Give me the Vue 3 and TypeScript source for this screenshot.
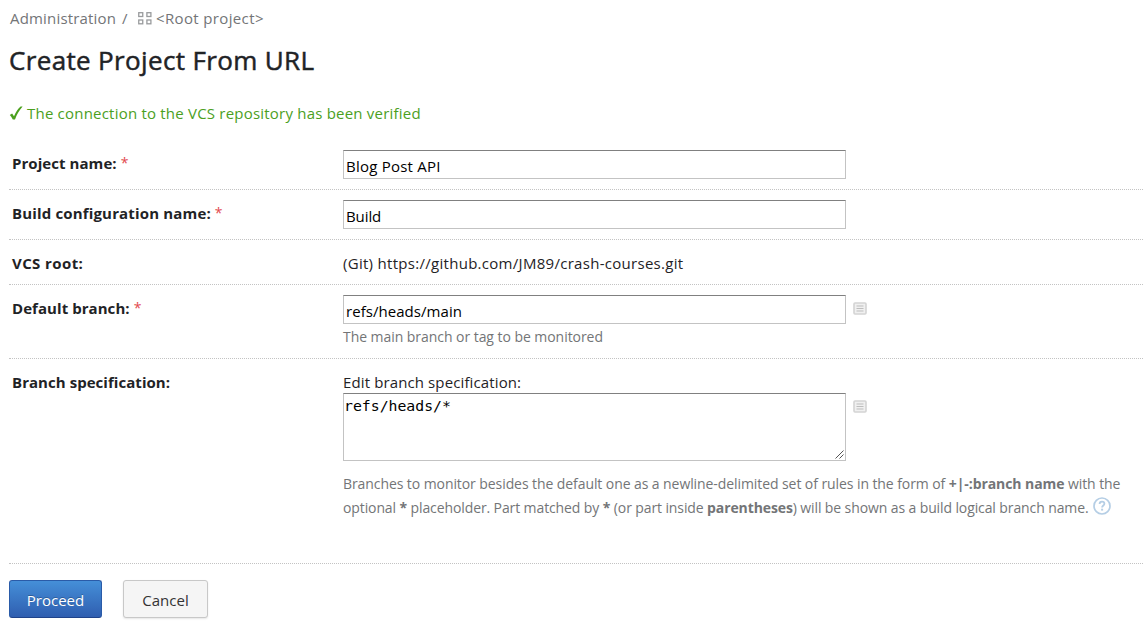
<script setup lang="ts">
import { ref } from 'vue'

const projectName = ref<string>('Blog Post API')
const buildName = ref<string>('Build')
const defaultBranch = ref<string>('refs/heads/main')
const branchSpec = ref<string>('refs/heads/*')
</script>

<template>
  <main class="page">
    <nav class="crumbs">
      <a class="crumb-admin">Administration</a>
      <span class="slash">/</span>
      <svg class="grid-icon" width="14" height="13" viewBox="0 0 14 13" fill="none" stroke="#999b9d" stroke-width="1.3">
        <rect x="0.75" y="0.7" width="4" height="3.8" />
        <rect x="8.9" y="0.7" width="4" height="3.8" />
        <rect x="0.75" y="8" width="4" height="3.8" />
        <rect x="8.9" y="8" width="4" height="3.8" />
      </svg>
      <a class="crumb-root">&lt;Root project&gt;</a>
    </nav>
    <h1>Create Project From URL</h1>
    <div class="verified">
      <svg width="14" height="15" viewBox="0 0 14 15">
        <path d="M0.8 8.9 L3.1 7.6 L5 10.3 C6.8 6.2 9.1 2.7 11.6 0.6 L13.6 0.6 C10.2 4.4 7.9 8.6 6 13.4 L3.8 13.6 C2.9 11.8 2 10.1 0.8 8.9 Z" fill="#4ba01e" />
      </svg>
      <span class="verified-text">The connection to the VCS repository has been verified</span>
    </div>

    <form class="form" @submit.prevent>
      <div class="row r1">
        <div class="label"><span class="l1">Project name:</span><span class="star">*</span></div>
        <div class="field"><input v-model="projectName" class="t-name" type="text" spellcheck="false" /></div>
      </div>
      <div class="row r2">
        <div class="label"><span class="l2">Build configuration name:</span><span class="star">*</span></div>
        <div class="field"><input v-model="buildName" class="t-build" type="text" spellcheck="false" /></div>
      </div>
      <div class="row r3">
        <div class="label"><span class="l3">VCS root:</span></div>
        <div class="field"><div class="vcs">(Git) https://github.com/JM89/crash-courses.git</div></div>
      </div>
      <div class="row r4">
        <div class="label"><span class="l4">Default branch:</span><span class="star">*</span></div>
        <div class="field">
          <div class="control">
            <input v-model="defaultBranch" class="t-branch" type="text" spellcheck="false" />
            <svg class="list-icon" width="14" height="13" viewBox="0 0 14 13">
              <rect x="1" y="1" width="12" height="11" rx="1" fill="#f0f0f0" stroke="#d4d4d4" stroke-width="1.6" />
              <path d="M3.5 4h7M3.5 6.5h7M3.5 9h7" stroke="#bdbdbd" />
            </svg>
          </div>
          <div class="hint">The main branch or tag to be monitored</div>
        </div>
      </div>
      <div class="row r5">
        <div class="label"><span class="l5">Branch specification:</span></div>
        <div class="field">
          <div class="edit">Edit branch specification:</div>
          <div class="control">
            <div class="area">
              <textarea v-model="branchSpec" spellcheck="false"></textarea>
              <svg class="grip" width="9" height="9" viewBox="0 0 9 9" stroke="#555" stroke-width="1">
                <path d="M0.5 8.5L8.5 0.5M4.5 8.5L8.5 4.5" />
              </svg>
            </div>
            <svg class="list-icon" width="14" height="13" viewBox="0 0 14 13">
              <rect x="1" y="1" width="12" height="11" rx="1" fill="#f0f0f0" stroke="#d4d4d4" stroke-width="1.6" />
              <path d="M3.5 4h7M3.5 6.5h7M3.5 9h7" stroke="#bdbdbd" />
            </svg>
          </div>
          <div class="help">
            <div class="line1">Branches to monitor besides the default one as a newline-delimited set of rules in the form of <b>+|-:branch name</b> with the</div>
            <div class="line2">
              <span>optional <b>*</b> placeholder. Part matched by <b>*</b> (or part inside <b>parentheses</b>) will be shown as a build logical branch name.</span>
              <svg class="question" width="18" height="18" viewBox="0 0 18 18" fill="none" stroke="#b5cee5">
                <circle cx="9" cy="9" r="8" stroke-width="1.7" />
                <path d="M6.6 7.1C6.6 5.5 7.6 4.7 9 4.7C10.5 4.7 11.4 5.6 11.4 6.8C11.4 8.6 9.1 8.5 9.1 10.6" stroke-width="1.8" />
                <path d="M9.1 11.7V13.6" stroke-width="2" />
              </svg>
            </div>
          </div>
        </div>
      </div>
      <div class="actions">
        <button class="btn proceed" type="button"><span>Proceed</span></button>
        <button class="btn cancel" type="button"><span>Cancel</span></button>
      </div>
    </form>
  </main>
</template>

<style>
body {
  background: #fff;
  overflow: hidden;
}
</style>

<style scoped>
.page {
  box-sizing: border-box;
  height: 629px;
  padding: 6px 0 0 9px;
  overflow: hidden;
  color: #1f2326;
  font-family: 'Open Sans', 'Noto Sans', sans-serif;
  font-size: 15px;
  line-height: 24px;
  white-space: nowrap;
}
.crumbs {
  display: flex;
  height: 24px;
  padding-left: 1px;
  color: #737577;
}
.crumb-admin { width: 112px; letter-spacing: 0.18px; }
.slash { width: 16px; }
.grid-icon { margin-top: 6px; width: 14px; margin-right: 4px; }
.crumb-root { letter-spacing: 0.36px; }
h1 {
  height: 36px;
  margin: 12px 0 0;
  font-size: 26px;
  font-weight: 500;
  line-height: 36px;
  letter-spacing: 0.35px;
  -webkit-text-stroke: 0.5px #1f2326;
}
.verified {
  display: flex;
  height: 24px;
  margin-top: 23px;
  color: #4ba01e;
}
.verified svg { margin: 5px 4px 0 0; }
.verified-text { letter-spacing: 0.21px; }
.form { margin-top: 15px; }
.row {
  box-sizing: border-box;
  display: grid;
  grid-template-columns: 334px 1fr;
  border-bottom: 1px dotted #c3c3c3;
  padding-top: 10px;
}
.r1 { height: 50px; }
.r2 { height: 50px; }
.r3 { height: 45px; }
.r4 { height: 74px; }
.r5 { height: 205px; }
.label {
  display: flex;
  gap: 4px;
  padding-left: 3px;
  margin-top: 1px;
  font-weight: 700;
}
.l1, .l4 { letter-spacing: 0.06px; }
.l2 { letter-spacing: 0.16px; }
.l3 { letter-spacing: 0.4px; }
.l5 { letter-spacing: 0.05px; }
.star { font-weight: 400; font-size: 14px; color: #e2494f; }
input, textarea {
  box-sizing: border-box;
  display: block;
  width: 503px;
  margin: 0;
  border: 1px solid #c3c3c3;
  border-top-color: #808080;
  border-radius: 0;
  outline: none;
  background: #fff;
  color: #000;
}
input {
  height: 29px;
  padding: 2px 2px 0;
  font: 15px 'Open Sans', 'Noto Sans', sans-serif;
}
.t-name { letter-spacing: 0.22px; }
.t-build { letter-spacing: -0.1px; }
.t-branch { letter-spacing: 0.05px; }
.control { display: flex; gap: 7px; }
.list-icon { margin-top: 7px; }
.vcs { margin-top: 1px; letter-spacing: 0.29px; }
.hint { margin-top: 1px; color: #737577; font-size: 14px; letter-spacing: -0.05px; }
.edit { margin-top: 1px; height: 23px; letter-spacing: 0.12px; }
.area { position: relative; height: 68px; }
textarea {
  height: 68px;
  padding: 2px 0;
  resize: none;
  overflow: hidden;
  font: 14.8px/20px 'DejaVu Sans Mono', monospace;
}
.grip { position: absolute; right: 2px; bottom: 2px; }
.help { margin-top: 11px; color: #737577; font-size: 14px; }
.line1 { letter-spacing: -0.08px; }
.line2 { display: flex; gap: 5px; letter-spacing: -0.108px; }
.question { margin-top: 1px; }
.actions { display: flex; gap: 21px; padding-top: 16px; }
.btn {
  box-sizing: border-box;
  height: 38px;
  padding: 2px 0 0;
  border-radius: 3px;
  font: 15px 'Open Sans', 'Noto Sans', sans-serif;
}
.proceed {
  width: 93px;
  border: 1px solid #2a5ba8;
  border-bottom-color: #1f438a;
  background: linear-gradient(#458fd8, #2f5eb0);
  color: #fff;
  text-shadow: 0 -1px 0 rgba(0, 0, 0, 0.25);
}
.cancel {
  width: 85px;
  border: 1px solid #c8c8c8;
  background: #f5f5f5;
  color: #333;
  box-shadow: 0 1px 2px rgba(0, 0, 0, 0.1);
}
</style>
